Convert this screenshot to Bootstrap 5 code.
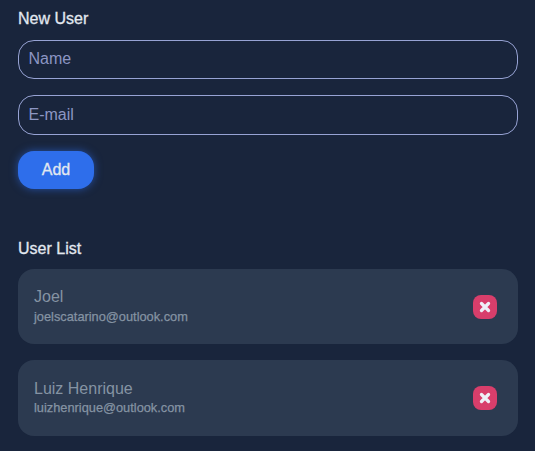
<!DOCTYPE html>
<html lang="en">
<head>
<meta charset="utf-8">
<meta name="viewport" content="width=device-width, initial-scale=1">
<title>Users</title>
<link href="https://cdn.jsdelivr.net/npm/bootstrap@5.3.0/dist/css/bootstrap.min.css" rel="stylesheet">
<style>
  body { background: #19253c; color: #e2e8f0; font-family: "Liberation Sans", Arial, sans-serif; overflow: hidden; }
  .page { padding: 7px 17px 0 18px; }
  .section-title { font-size: 16px; line-height: 24px; font-weight: 400; -webkit-text-stroke: .3px currentColor; }
  .fields { padding-top: 1px; }
  .field, .field:focus { height: 39.4px; padding: 0 9.5px 1.4px; border: 1px solid #97a3d4; border-radius: 16px; background: transparent; color: #e2e8f0; line-height: 24px; }
  .field[type="email"] { padding-bottom: 0; }
  .field::placeholder { color: #8c96c4; opacity: 1; }
  .btn-add { width: 76px; height: 38px; padding: 0; border: 0; border-radius: 16px; background: #2e6eeb; color: #e2e8f0; -webkit-text-stroke: .3px currentColor; box-shadow: 0 0 8px rgba(46,110,235,.6); }
  .btn-add:hover { background: #3b7af5; color: #fff; }
  .list-title { margin-top: 48px; }
  .user-card { height: 75.5px; padding: 0 21px 0 16px; border-radius: 16px; background: #2c3a50; color: #8593a3; }
  .user-name { line-height: 20px; }
  .user-mail { font-size: 12.8px; line-height: 19.2px; -webkit-text-stroke: .25px currentColor; }
  .user-card + .user-card .user-name { padding-top: 1px; line-height: 19.5px; }
  .user-card + .user-card .user-mail { margin-top: -.8px; padding-bottom: .8px; }
  .btn-remove { width: 24px; height: 24px; border: 0; border-radius: 8px; background: #d83e6b; }
</style>
</head>
<body>
<main class="page">
  <form>
    <h2 class="section-title mb-0">New User</h2>
    <div class="d-flex flex-column align-items-start gap-3 mt-2 fields">
      <input class="form-control field" type="text" placeholder="Name" aria-label="Name">
      <input class="form-control field" type="email" placeholder="E-mail" aria-label="E-mail">
      <button class="btn btn-add" type="button">Add</button>
    </div>
  </form>
  <section>
    <h2 class="section-title list-title mb-0">User List</h2>
    <div class="d-flex flex-column gap-3 mt-2">
      <div class="user-card d-flex align-items-center justify-content-between">
        <div>
          <div class="user-name">Joel</div>
          <div class="user-mail">joelscatarino@outlook.com</div>
        </div>
        <button class="btn-remove d-flex align-items-center justify-content-center p-0" type="button" aria-label="Remove">
          <svg width="12" height="12" viewBox="0 0 12 12" fill="none" stroke="#eef0f8" stroke-width="3.3" stroke-linecap="round"><path d="M2.5 2.5l7 7M9.5 2.5l-7 7"/></svg>
        </button>
      </div>
      <div class="user-card d-flex align-items-center justify-content-between">
        <div>
          <div class="user-name">Luiz Henrique</div>
          <div class="user-mail">luizhenrique@outlook.com</div>
        </div>
        <button class="btn-remove d-flex align-items-center justify-content-center p-0" type="button" aria-label="Remove">
          <svg width="12" height="12" viewBox="0 0 12 12" fill="none" stroke="#eef0f8" stroke-width="3.3" stroke-linecap="round"><path d="M2.5 2.5l7 7M9.5 2.5l-7 7"/></svg>
        </button>
      </div>
    </div>
  </section>
</main>
<script src="https://cdn.jsdelivr.net/npm/bootstrap@5.3.0/dist/js/bootstrap.bundle.min.js"></script>
</body>
</html>
